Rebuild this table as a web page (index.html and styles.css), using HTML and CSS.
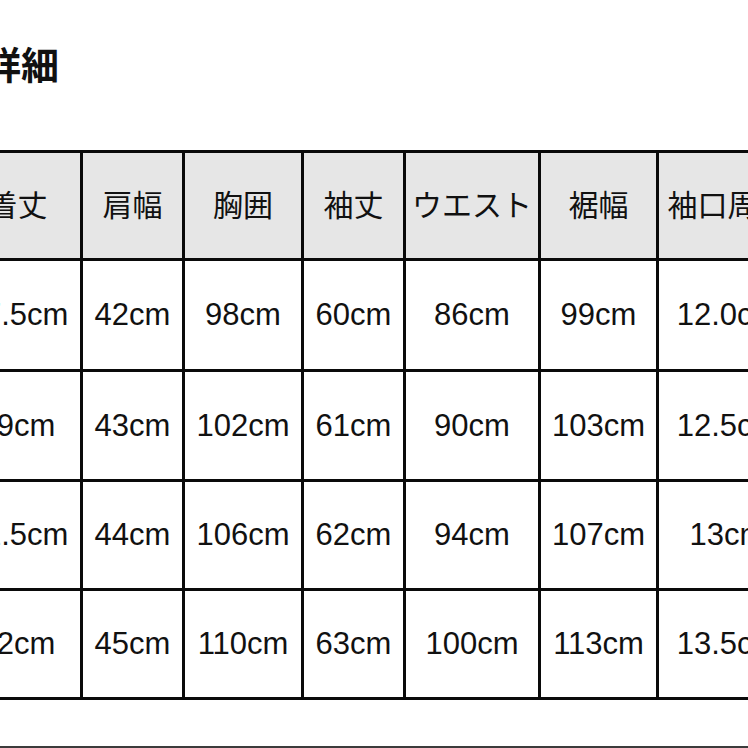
FILE: index.html
```html
<!DOCTYPE html>
<html lang="ja">
<head>
<meta charset="utf-8">
<title>詳細</title>
<link rel="stylesheet" href="styles.css">
</head>
<body>
<div class="page">
  <h1 class="title">詳細</h1>
  <div class="size-table">
    <div class="cell head">着丈</div>
    <div class="cell head">肩幅</div>
    <div class="cell head">胸囲</div>
    <div class="cell head">袖丈</div>
    <div class="cell head">ウエスト</div>
    <div class="cell head">裾幅</div>
    <div class="cell head">袖口周囲</div>

    <div class="cell">67.5cm</div>
    <div class="cell">42cm</div>
    <div class="cell">98cm</div>
    <div class="cell">60cm</div>
    <div class="cell">86cm</div>
    <div class="cell">99cm</div>
    <div class="cell">12.0cm</div>

    <div class="cell">69cm</div>
    <div class="cell">43cm</div>
    <div class="cell">102cm</div>
    <div class="cell">61cm</div>
    <div class="cell">90cm</div>
    <div class="cell">103cm</div>
    <div class="cell">12.5cm</div>

    <div class="cell">71.5cm</div>
    <div class="cell">44cm</div>
    <div class="cell">106cm</div>
    <div class="cell">62cm</div>
    <div class="cell">94cm</div>
    <div class="cell">107cm</div>
    <div class="cell">13cm</div>

    <div class="cell">72cm</div>
    <div class="cell">45cm</div>
    <div class="cell">110cm</div>
    <div class="cell">63cm</div>
    <div class="cell">100cm</div>
    <div class="cell">113cm</div>
    <div class="cell">13.5cm</div>
  </div>
  <div class="rule"></div>
</div>
</body>
</html>
```

FILE: styles.css
```css
html, body {
  margin: 0;
  padding: 0;
  background: #ffffff;
  overflow: hidden;
}

.page {
  width: 748px;
  height: 748px;
  overflow: hidden;
  padding-top: 44px;
  box-sizing: border-box;
  font-family: "Liberation Sans", "Noto Sans CJK JP", sans-serif;
  color: #111111;
}

.title {
  margin: 0 0 68px -17px;
  font-family: "Noto Sans CJK JP", sans-serif;
  font-size: 38px;
  line-height: 38px;
  font-weight: 700;
  color: #111111;
}

.size-table {
  display: grid;
  grid-template-columns: 125px 99px 116px 99px 132px 115px 137px;
  grid-template-rows: 105px 108px 107px 106px 106px;
  gap: 3px;
  padding: 3px;
  background: #0a0a0a;
  width: max-content;
  margin-left: -48px;
}

.cell {
  background: #ffffff;
  display: flex;
  align-items: center;
  justify-content: center;
  font-size: 31px;
  white-space: nowrap;
  color: #111111;
}

.head {
  background: #e6e6e6;
  font-family: "Noto Sans CJK JP", sans-serif;
  font-size: 30px;
  font-weight: 400;
  padding-bottom: 5px;
  box-sizing: border-box;
}

.rule {
  margin-top: 46px;
  height: 2px;
  background: #3c3c3c;
}
```
